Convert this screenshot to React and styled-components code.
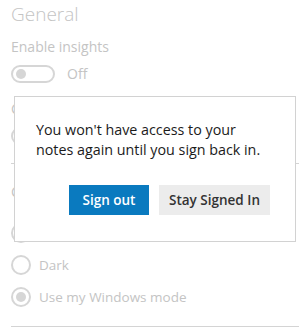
import React from 'react';
import styled, { createGlobalStyle } from 'styled-components';

const GlobalStyle = createGlobalStyle`
  html, body {
    margin: 0;
    padding: 0;
    background: #ffffff;
  }
  body {
    font-family: "Open Sans", "Noto Sans", sans-serif;
  }
`;

const Page = styled.div`
  position: relative;
  width: 308px;
  height: 328px;
  overflow: hidden;
  padding: 0 9px 0 11px;
  box-sizing: border-box;
  color: #c4c4c4;
`;

const Heading = styled.h2`
  margin: 0 0 9px;
  font-size: 19px;
  line-height: 28px;
  font-weight: 300;
`;

const Label = styled.div`
  font-size: 14px;
  line-height: 20px;
  margin-top: ${p => p.$top || 0}px;
`;

const ToggleRow = styled.div`
  display: flex;
  align-items: center;
  gap: 12px;
  margin-top: 8px;
  font-size: 14px;
  line-height: 18px;
`;

const Toggle = styled.div`
  width: 44px;
  height: 18px;
  box-sizing: border-box;
  border: 2px solid #d6d6d6;
  border-radius: 9px;
  display: flex;
  align-items: center;
  padding-left: 3px;
`;

const Knob = styled.span`
  width: 10px;
  height: 10px;
  border-radius: 50%;
  background: #d6d6d6;
`;

const Divider = styled.hr`
  margin: ${p => p.$top}px 0 0;
  border: 0;
  border-top: 1px solid #d4d4d4;
`;

const RadioGroup = styled.div`
  display: flex;
  flex-direction: column;
  gap: 12px;
  margin-top: 21px;
`;

const RadioRow = styled.label`
  display: flex;
  align-items: center;
  gap: 8px;
  font-size: 13.5px;
  line-height: 20px;
`;

const Radio = styled.span`
  width: 20px;
  height: 20px;
  box-sizing: border-box;
  border: 2px solid #d6d6d6;
  border-radius: 50%;
  display: flex;
  align-items: center;
  justify-content: center;
  &::after {
    content: '';
    width: 10px;
    height: 10px;
    border-radius: 50%;
    background: ${p => (p.$checked ? '#d6d6d6' : 'transparent')};
  }
`;

const Dialog = styled.div`
  position: absolute;
  left: 14px;
  top: 96px;
  width: 282px;
  height: 146px;
  box-sizing: border-box;
  background: #ffffff;
  border: 1px solid #d2d2d2;
  padding: 23px 20px 0 21px;
  display: flex;
  flex-direction: column;
`;

const Message = styled.p`
  margin: 0;
  font-size: 14.3px;
  line-height: 20px;
  color: #1b1b1b;
`;

const Actions = styled.div`
  display: flex;
  justify-content: flex-end;
  gap: 10px;
  margin-top: 25px;
  padding-right: 5px;
`;

const Button = styled.button`
  height: 30px;
  width: ${p => p.$width}px;
  border: 0;
  padding: 0;
  font-family: inherit;
  font-size: 13.5px;
  font-weight: 600;
  background: ${p => (p.$primary ? '#0a7abf' : '#ececec')};
  color: ${p => (p.$primary ? '#ffffff' : '#333333')};
`;

export default function App() {
  return (
    <>
      <GlobalStyle />
      <Page>
        <Heading>General</Heading>
        <Label>Enable insights</Label>
        <ToggleRow>
          <Toggle><Knob /></Toggle>
          <span>Off</span>
        </ToggleRow>
        <Label $top={16}>Cloud sync</Label>
        <ToggleRow>
          <Toggle><Knob /></Toggle>
          <span>Off</span>
        </ToggleRow>
        <Divider $top={18} />
        <Label $top={18}>Color</Label>
        <RadioGroup>
          <RadioRow><Radio />Light</RadioRow>
          <RadioRow><Radio />Dark</RadioRow>
          <RadioRow><Radio $checked />Use my Windows mode</RadioRow>
        </RadioGroup>
        <Divider $top={19} />

        <Dialog>
          <Message>
            You won't have access to your notes again until you sign back in.
          </Message>
          <Actions>
            <Button $primary $width={80}>Sign out</Button>
            <Button $width={111}>Stay Signed In</Button>
          </Actions>
        </Dialog>
      </Page>
    </>
  );
}
